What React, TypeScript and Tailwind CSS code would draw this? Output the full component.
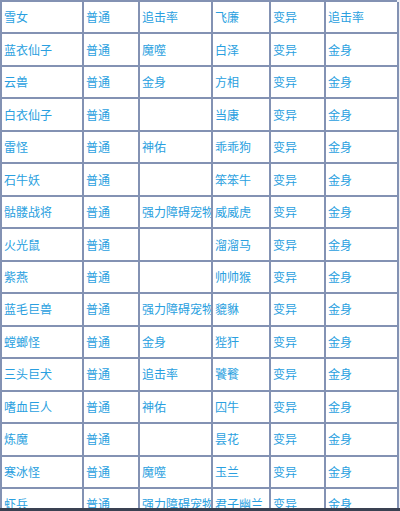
import React from "react";

const rows: string[][] = [
  ["雪女", "普通", "追击率", "飞廉", "变异", "追击率"],
  ["蓝衣仙子", "普通", "魔噬", "白泽", "变异", "金身"],
  ["云兽", "普通", "金身", "方相", "变异", "金身"],
  ["白衣仙子", "普通", "", "当康", "变异", "金身"],
  ["雷怪", "普通", "神佑", "乖乖狗", "变异", "金身"],
  ["石牛妖", "普通", "", "笨笨牛", "变异", "金身"],
  ["骷髅战将", "普通", "强力障碍宠物", "威威虎", "变异", "金身"],
  ["火光鼠", "普通", "", "溜溜马", "变异", "金身"],
  ["紫燕", "普通", "", "帅帅猴", "变异", "金身"],
  ["蓝毛巨兽", "普通", "强力障碍宠物", "貔貅", "变异", "金身"],
  ["螳螂怪", "普通", "金身", "狴犴", "变异", "金身"],
  ["三头巨犬", "普通", "追击率", "饕餮", "变异", "金身"],
  ["嗜血巨人", "普通", "神佑", "囚牛", "变异", "金身"],
  ["炼魔", "普通", "", "昙花", "变异", "金身"],
  ["寒冰怪", "普通", "魔噬", "玉兰", "变异", "金身"],
  ["虾兵", "普通", "强力障碍宠物", "君子幽兰", "变异", "金身"],
];

export default function App() {
  return (
    <div className="relative h-[511px] w-[400px] overflow-hidden bg-[#eef0f5] font-['Noto_Sans_CJK_SC',sans-serif]">
      <div className="grid w-[397px] grid-cols-[82px_56px_73px_58px_55px_73px] auto-rows-[32.47px] border-l-2 border-t-2 border-[#8392b3] bg-white">
        {rows.map((row, i) =>
          row.map((cell, j) => (
            <div
              key={`${i}-${j}`}
              className="flex items-center overflow-hidden whitespace-nowrap border-b-2 border-r-2 border-[#8392b3] pl-[2px] text-[12px] leading-none text-[#2a9fe0]"
            >
              {cell}
            </div>
          ))
        )}
      </div>
      <div className="absolute bottom-0 left-0 h-[3px] w-full bg-[#3a4152]" />
    </div>
  );
}
